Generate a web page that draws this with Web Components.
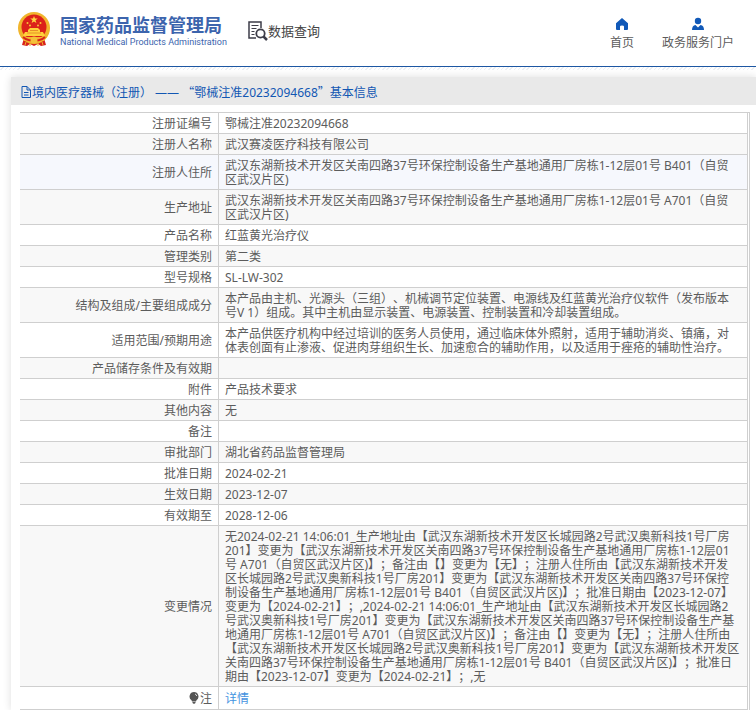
<!DOCTYPE html>
<html lang="zh-CN">
<head>
<meta charset="utf-8">
<title>国家药品监督管理局 数据查询</title>
<style>
    :root {
        --blue: #1257b3;
        --brand: #3c64ad;
        --text: #5c5c5c;
        --line: #cfcfcf;
    }

    body {
        margin: 0;
        background: #fff;
        color: var(--text);
        font-family: 'Noto Sans', 'Noto Sans CJK SC', sans-serif;
        font-size: 12px;
        line-height: 14px;
        text-spacing-trim: space-all;
    }

    .quote {
        font-family: 'Noto Sans CJK SC', sans-serif;
    }
</style>
</head>
<body>
<site-header>
    <nav-item href="#home">
        <svg slot="icon" width="14" height="14" viewBox="0 0 14 14" fill="#1159b8"><path d="M7 1 13 6.2V12q0 1-1 1H9V9.5Q9 8.500 7 8.500T5 9.500V13H2q-1 0-1-1V6.200z"/></svg>
        首页
    </nav-item>
    <nav-item href="#service">
        <svg slot="icon" width="14" height="14" viewBox="0 0 14 14" fill="#1159b8"><circle cx="7" cy="4" r="3.200"/><path d="M1 13Q1 8.500 4.500 8L7 10.500 9.500 8Q13 8.500 13 13z"/></svg>
        政务服务门户
    </nav-item>
</site-header>
<info-panel>
    <span slot="title">境内医疗器械（注册） —— <span class="quote">“</span>鄂械注准20232094668<span class="quote">”</span>基本信息</span>
    <record-table></record-table>
</info-panel>

<script>
const headerTemplate = document.createElement('template');
headerTemplate.innerHTML = `
<style>
    :host {
        display: block;
    }

    header {
        display: flex;
        align-items: flex-start;
        height: 66px;
        padding: 0 22px 0 16px;
        box-sizing: border-box;
    }

    .brand {
        display: flex;
        gap: 8px;
        padding-top: 11px;
        color: var(--brand);
        text-decoration: none;
        white-space: nowrap;
    }

    .name {
        display: flex;
        flex-direction: column;
        padding-top: 4px;
    }

    strong {
        font-size: 18px;
        line-height: 20px;
    }

    small {
        font-family: Roboto, sans-serif;
        font-size: 9px;
        line-height: 14px;
    }

    .query {
        display: flex;
        align-items: center;
        margin: 20px 0 0 20px;
        color: #444;
        font-size: 13px;
        line-height: 20px;
        white-space: nowrap;
    }

    nav {
        display: flex;
        gap: 28px;
        margin-left: auto;
        padding-top: 17px;
    }

    .edge {
        height: 3px;
        border-top: 1px solid #1d57a3;
        background: repeating-linear-gradient(135deg, #fff 0 2px, #eceff3 2px 3px);
    }
</style>
<header>
    <a class="brand" href="#">
        <svg width="36" height="38" viewBox="0 0 36 38">
            <path d="M8 27 6 34l5 1 3-2 4 2 4-2 3 2 5-1-2-7z" fill="#d8231d"/>
            <circle cx="18" cy="17" r="16" fill="#f1b52d"/>
            <circle cx="18" cy="16" r="12.500" fill="#dc211a"/>
            <path d="m18 5 1 2.500h2.800L19.500 9.200l.9 2.800L18 10.400 15.600 12l.9-2.800-2.300-1.700H17z" fill="#ffd641"/>
            <g fill="#f7c437"><circle cx="11.500" cy="12" r="1"/><circle cx="14" cy="14.500" r="1"/><circle cx="22" cy="14.500" r="1"/><circle cx="24.500" cy="12" r="1"/></g>
            <path d="M12 19l2-2h8l2 2v2h3l2 4H7l2-4h3z" fill="#ffd13b"/>
            <path d="M11 22h14M14 19.500h8" stroke="#e8902a"/>
            <path d="M5 26h26l-3 4H8z" fill="#f1b52d"/>
            <path d="M7 26q4 4 8 3M29 26q-4 4-8 3" fill="none" stroke="#d8231d" stroke-width="2"/>
            <circle cx="18" cy="29" r="3.500" fill="#f4c13a"/>
            <path d="m10 31-1 3M14 32v3m8-3v3m4-4 1 3" stroke="#eeb12c"/>
        </svg>
        <span class="name"><strong>国家药品监督管理局</strong><small>National Medical Products Administration</small></span>
    </a>
    <div class="query">
        <svg width="21" height="21" viewBox="0 0 21 21" fill="none" stroke="#3d3d48">
            <path d="M9 18H2V2h12v6" stroke-width="1.500"/>
            <path d="M4.500 5.500h7m-7 3h5m-5 3h3m-3 3h3"/>
            <circle cx="13.500" cy="13.500" r="4.200" fill="#fff" stroke-width="1.800"/>
            <path d="m16.500 16.500 3.500 3.500" stroke-width="2.500"/>
        </svg>
        数据查询
    </div>
    <nav><slot></slot></nav>
</header>
<div class="edge"></div>
`;

class SiteHeader extends HTMLElement {
    constructor() {
        super();
        this.attachShadow({mode: 'open'}).append(headerTemplate.content.cloneNode(true));
    }
}

const navItem = document.createElement('template');
navItem.innerHTML = `
<style>
    :host {
        display: block;
    }

    a {
        display: flex;
        flex-direction: column;
        align-items: center;
        gap: 4px;
        color: var(--text);
        line-height: 16px;
        text-decoration: none;
        white-space: nowrap;
    }
</style>
<a><slot name="icon"></slot><span><slot></slot></span></a>
`;

class NavItem extends HTMLElement {
    constructor() {
        super();
        this.attachShadow({mode: 'open'}).append(navItem.content.cloneNode(true));
    }

    connectedCallback() {
        this.shadowRoot.querySelector('a').href = this.getAttribute('href');
    }
}

const panelTemplate = document.createElement('template');
panelTemplate.innerHTML = `
<style>
    :host {
        display: block;
        padding: 7px 0 0 11px;
        overflow: hidden;
    }

    section {
        background: #fff;
        box-shadow: 0 0 8px #ddd;
    }

    h1 {
        display: flex;
        align-items: center;
        gap: 1px;
        box-sizing: border-box;
        height: 28px;
        margin: 0;
        padding: 2px 0 0 10px;
        background: #e9e9e9;
        color: var(--blue);
        font-size: 12px;
        font-weight: normal;
    }

    .body {
        padding: 7px 6px 0 9px;
    }
</style>
<section>
    <h1>
        <svg width="10" height="12" viewBox="0 0 10 12" fill="none" stroke="#1257b3"><path d="M1 .5h5L9.500 4v7.500H1zM6 .5V4h3.500M3 6.500h4.500M3 9h4.500"/></svg>
        <slot name="title"></slot>
    </h1>
    <div class="body"><slot></slot></div>
</section>
`;

class InfoPanel extends HTMLElement {
    constructor() {
        super();
        this.attachShadow({mode: 'open'}).append(panelTemplate.content.cloneNode(true));
    }
}

const records = [
    ['注册证编号', '鄂械注准20232094668'],
    ['注册人名称', '武汉赛凌医疗科技有限公司'],
    ['注册人住所', '武汉东湖新技术开发区关南四路37号环保控制设备生产基地通用厂房栋1-12层01号 B401（自贸<br>区武汉片区)'],
    ['生产地址', '武汉东湖新技术开发区关南四路37号环保控制设备生产基地通用厂房栋1-12层01号 A701（自贸<br>区武汉片区)'],
    ['产品名称', '红蓝黄光治疗仪'],
    ['管理类别', '第二类'],
    ['型号规格', 'SL-LW-302'],
    ['结构及组成/主要组成成分', '本产品由主机、光源头（三组）、机械调节定位装置、电源线及红蓝黄光治疗仪软件（发布版本<br>号V 1）组成。其中主机由显示装置、电源装置、控制装置和冷却装置组成。'],
    ['适用范围/预期用途', '本产品供医疗机构中经过培训的医务人员使用，通过临床体外照射，适用于辅助消炎、镇痛，对<br>体表创面有止渗液、促进肉芽组织生长、加速愈合的辅助作用，以及适用于痤疮的辅助性治疗。'],
    ['产品储存条件及有效期', ''],
    ['附件', '产品技术要求'],
    ['其他内容', '无'],
    ['备注', ''],
    ['审批部门', '湖北省药品监督管理局'],
    ['批准日期', '2024-02-21'],
    ['生效日期', '2023-12-07'],
    ['有效期至', '2028-12-06'],
    ['变更情况', [
        '无2024-02-21 14:06:01_生产地址由【武汉东湖新技术开发区长城园路2号武汉奥新科技1号厂房',
        '201】变更为【武汉东湖新技术开发区关南四路37号环保控制设备生产基地通用厂房栋1-12层01',
        '号 A701（自贸区武汉片区)】；备注由【】变更为【无】；注册人住所由【武汉东湖新技术开发',
        '区长城园路2号武汉奥新科技1号厂房201】变更为【武汉东湖新技术开发区关南四路37号环保控',
        '制设备生产基地通用厂房栋1-12层01号 B401（自贸区武汉片区)】；批准日期由【2023-12-07】',
        '变更为【2024-02-21】；,2024-02-21 14:06:01_生产地址由【武汉东湖新技术开发区长城园路2',
        '号武汉奥新科技1号厂房201】变更为【武汉东湖新技术开发区关南四路37号环保控制设备生产基',
        '地通用厂房栋1-12层01号 A701（自贸区武汉片区)】；备注由【】变更为【无】；注册人住所由',
        '【武汉东湖新技术开发区长城园路2号武汉奥新科技1号厂房201】变更为【武汉东湖新技术开发区',
        '关南四路37号环保控制设备生产基地通用厂房栋1-12层01号 B401（自贸区武汉片区)】；批准日',
        '期由【2023-12-07】变更为【2024-02-21】；,无'
    ].join('<br>')]
];

const tableTemplate = document.createElement('template');
tableTemplate.innerHTML = `
<style>
    :host {
        display: block;
        padding-right: 1px;
        border-top: 1px solid var(--line);
        border-right: 1px solid var(--line);
    }

    table {
        width: 100%;
        table-layout: fixed;
        border-collapse: separate;
        border-spacing: 0;
        border-right: 1px solid var(--line);
    }

    th, td {
        padding: 4px 6px 2px;
        border-bottom: 1px solid var(--line);
        font-weight: normal;
        line-height: 14px;
    }

    th {
        width: 199px;
        box-sizing: border-box;
        height: 21px;
        border-right: 1px solid var(--line);
        text-align: right;
        white-space: nowrap;
    }

    td {
        text-align: left;
    }

    tr:nth-child(even) {
        background: #f8f8f8;
    }

    tr.active {
        background: #f6f8fd;
    }

    .note th, .note td {
        line-height: 16px;
    }

    .note svg {
        vertical-align: -1px;
    }

    a {
        color: #4493e0;
        text-decoration: none;
    }
</style>
<table><tbody></tbody></table>
`;

class RecordTable extends HTMLElement {
    constructor() {
        super();
        const shadow = this.attachShadow({mode: 'open'});
        shadow.append(tableTemplate.content.cloneNode(true));
        const rows = records.map(([label, value], i) =>
            `<tr${i === 2 ? ' class="active"' : ''}><th scope="row">${label}</th><td>${value}</td></tr>`);
        rows.push(`<tr class="note">
            <th scope="row"><svg width="11" height="12" viewBox="0 0 11 12"><path d="M5 0a4.500 4.500 0 0 1 2.500 8.200L7 9.500H3L2.500 8.200A4.500 4.500 0 0 1 5 0zM3.500 10h3v1L5 12l-1.500-1z" fill="#555"/><path d="M6 2q1.500.5 1.700 2" fill="none" stroke="#ddd"/></svg>注</th>
            <td><a href="#detail">详情</a></td>
        </tr>`);
        shadow.querySelector('tbody').innerHTML = rows.join('');
    }
}

window.customElements.define('site-header', SiteHeader);
window.customElements.define('nav-item', NavItem);
window.customElements.define('info-panel', InfoPanel);
window.customElements.define('record-table', RecordTable);
</script>
</body>
</html>
